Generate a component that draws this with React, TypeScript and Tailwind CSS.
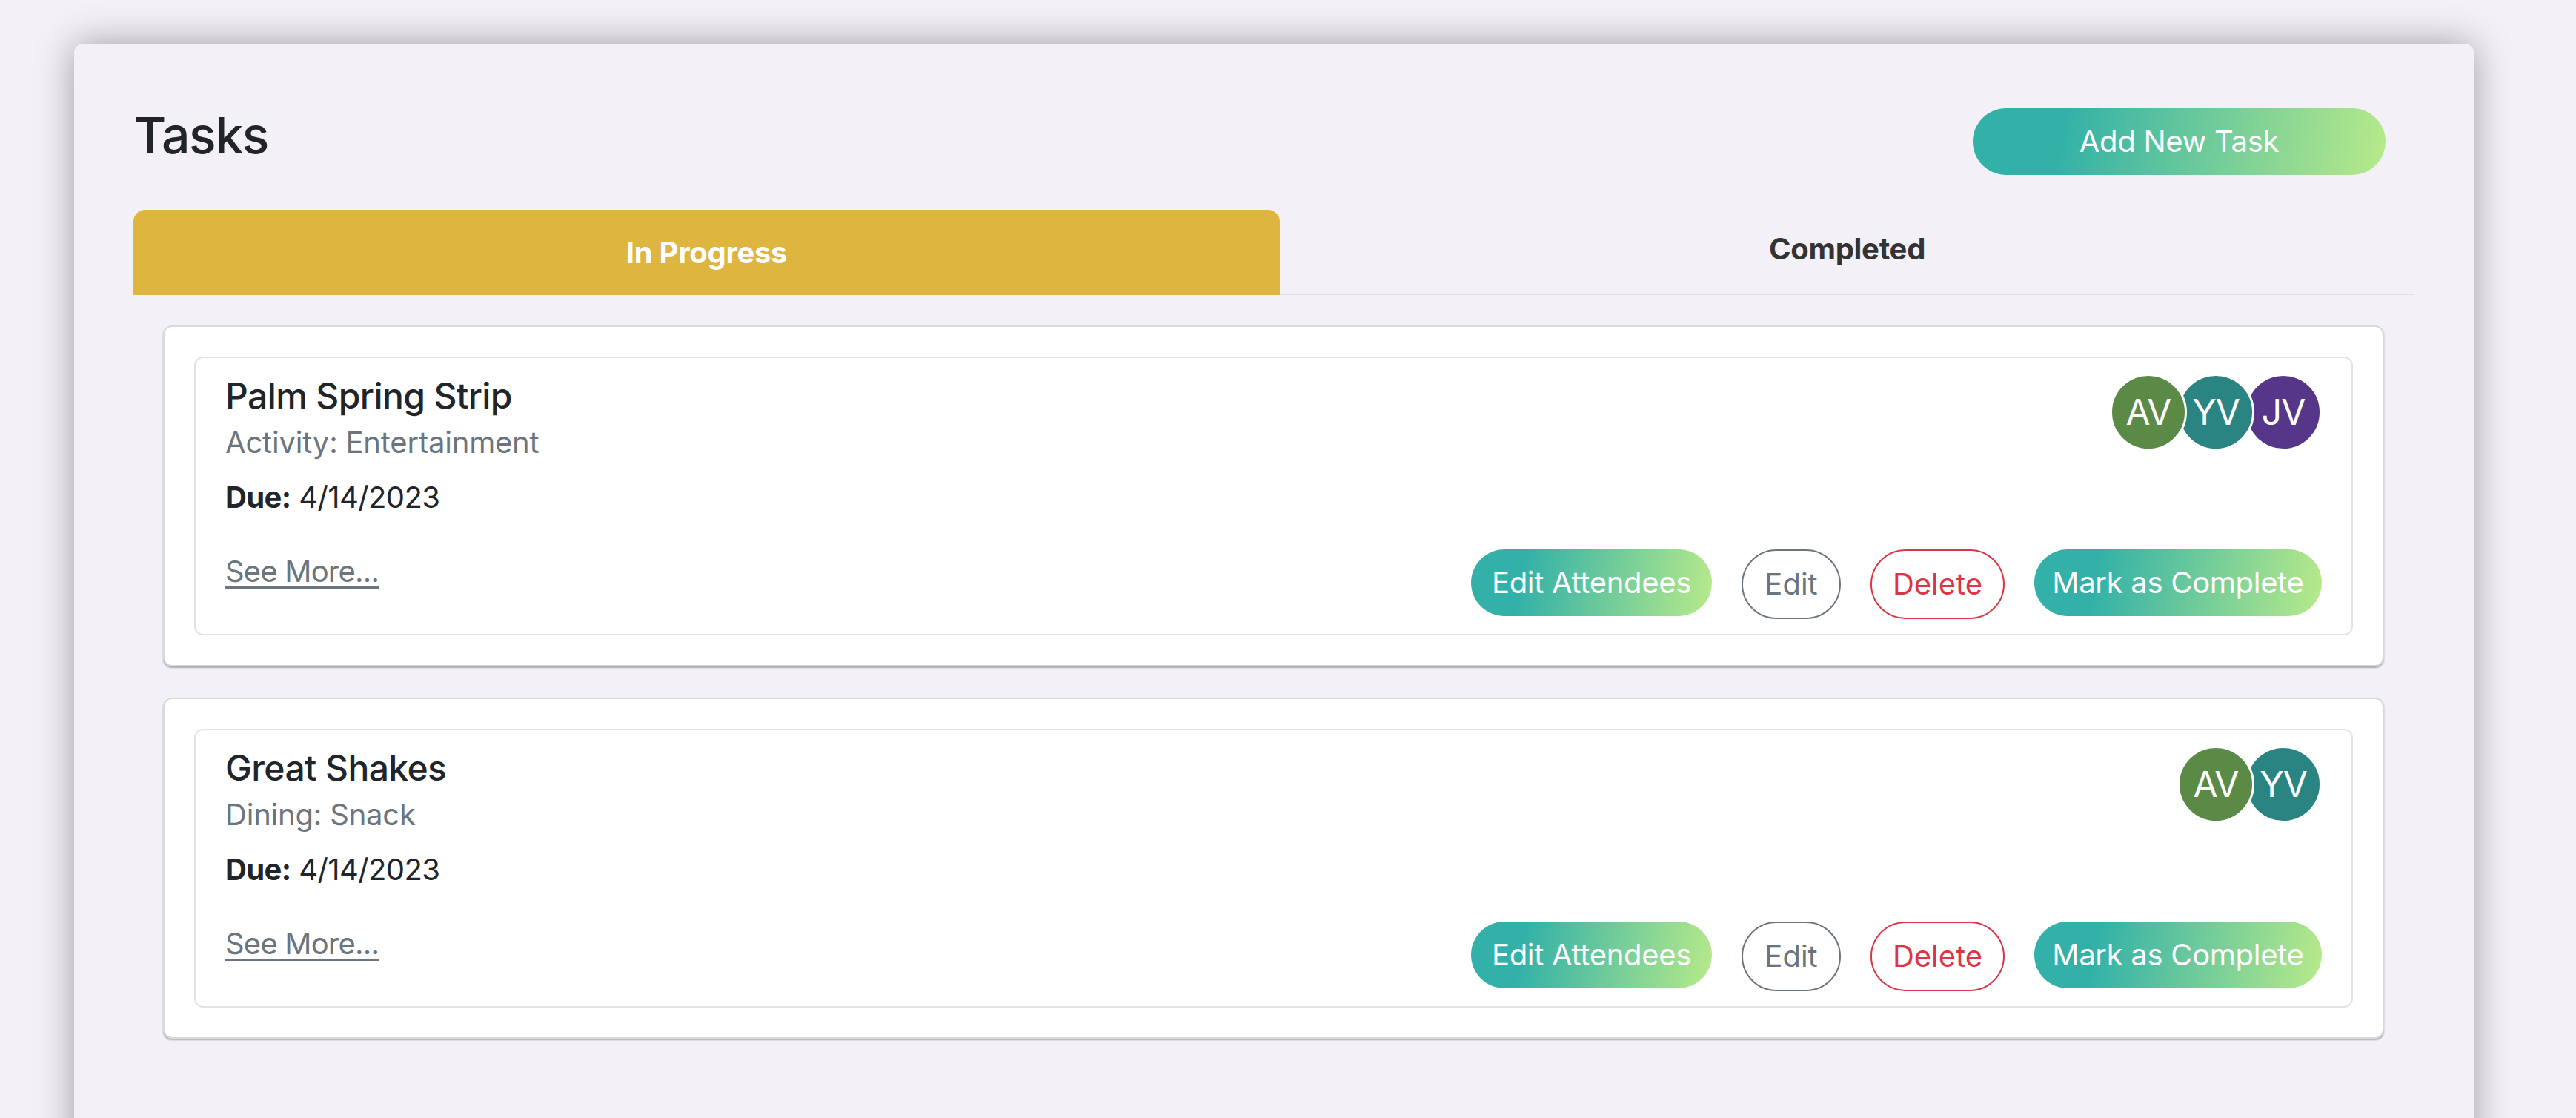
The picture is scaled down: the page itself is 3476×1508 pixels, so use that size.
import React from 'react';

type Person = {initials: string; color: string};

type Task = {
  title: string;
  category: string;
  due: string;
  people: Person[];
};

const tasks: Task[] = [
  {
    title: 'Palm Spring Strip',
    category: 'Activity: Entertainment',
    due: '4/14/2023',
    people: [
      {initials: 'AV', color: 'bg-[#5b8a46]'},
      {initials: 'YV', color: 'bg-[#2a8481]'},
      {initials: 'JV', color: 'bg-[#553689]'}
    ]
  },
  {
    title: 'Great Shakes',
    category: 'Dining: Snack',
    due: '4/14/2023',
    people: [
      {initials: 'AV', color: 'bg-[#5b8a46]'},
      {initials: 'YV', color: 'bg-[#2a8481]'}
    ]
  }
];

const gradient =
  'bg-[linear-gradient(100deg,#33b1a8_22%,#b8ea8a_100%)] text-white';

const zOrder = ['z-[3]', 'z-[2]', 'z-[1]'];

function Avatars({people}: {people: Person[]}) {
  return (
    <div className="flex -mt-[1px]">
      {people.map((p, i) => (
        <div
          key={p.initials}
          className={`relative ${zOrder[i]} ${p.color} ${i > 0 ? '-ml-[13px]' : ''} flex size-[104px] items-center justify-center rounded-full border-[3px] border-white text-[48px] tracking-[-1px] text-white`}
        >
          {p.initials}
        </div>
      ))}
    </div>
  );
}

function TaskCard({task}: {task: Task}) {
  return (
    <div className="rounded-[12px] border-2 border-[#d9d9dc] bg-white p-[40px] shadow-[0_2px_2px_rgba(0,0,0,0.3)]">
      <div className="rounded-[12px] border-2 border-[#e3e3e5] px-[40px] pt-[22px] pb-[20px]">
        {/* Title + attendees */}
        <div className="flex items-start justify-between">
          <div className="flex flex-col">
            <div className="text-[48px] leading-[58px] font-medium tracking-[-0.6px] text-[#212529]">
              {task.title}
            </div>
            <div className="mt-[10px] text-[40px] leading-[48px] tracking-[-0.2px] text-[#6c757d]">
              {task.category}
            </div>
            <div className="mt-[26px] text-[40px] leading-[48px] tracking-[-0.6px] text-[#212529]">
              <span className="font-bold">Due:</span> {task.due}
            </div>
          </div>
          <Avatars people={task.people} />
        </div>
        {/* Footer */}
        <div className="mt-[46px] flex items-start justify-between">
          <a className="mt-[6px] text-[40px] leading-[48px] tracking-[-0.8px] text-[#6c757d] underline decoration-[3px] underline-offset-[6px]">
            See More...
          </a>
          <div className="flex items-start gap-[40px]">
            <button className={`${gradient} flex h-[90px] w-[325px] items-center justify-center rounded-full text-[40px] tracking-[-0.3px]`}>
              Edit Attendees
            </button>
            <button className="flex h-[94px] w-[134px] items-center justify-center rounded-full border-2 border-[#6c757d] text-[40px] text-[#6c757d]">
              Edit
            </button>
            <button className="flex h-[94px] w-[181px] items-center justify-center rounded-full border-2 border-[#dc3545] text-[40px] text-[#dc3545]">
              Delete
            </button>
            <button className={`${gradient} flex h-[90px] w-[388px] items-center justify-center rounded-full text-[40px] tracking-[-0.3px]`}>
              Mark as Complete
            </button>
          </div>
        </div>
      </div>
    </div>
  );
}

export default function App() {
  return (
    <div
      className="h-[1508px] w-[3476px] overflow-hidden bg-[#f3f0f7] pt-[59px] pl-[100px]"
      style={{fontFamily: 'Inter, "Liberation Sans", sans-serif'}}
    >
      <div className="min-h-[1600px] w-[3238px] rounded-[12px] bg-[#f3f1f7] px-[80px] pt-[81px] shadow-[0_0_50px_rgba(0,0,0,0.35)]">
        {/* Header */}
        <div className="flex h-[84px] items-start justify-between">
          <h2 className="text-[68px] leading-[84px] font-medium tracking-[-1.5px] text-[#212529]">
            Tasks
          </h2>
          <button className={`${gradient} mt-[6px] mr-[39px] h-[90px] w-[557px] shrink-0 rounded-full text-[40px] tracking-[-0.3px]`}>
            Add New Task
          </button>
        </div>
        {/* Tabs */}
        <div className="mt-[59px] flex h-[115px] border-b-2 border-[#dee2e6]">
          <div className="flex h-[115px] w-[1547px] shrink-0 items-center justify-center rounded-t-[16px] bg-[#ddb53f] text-[40px] font-bold tracking-[-0.3px] text-white">
            In Progress
          </div>
          <div className="flex flex-1 items-center justify-center pb-[7px] text-[40px] font-bold tracking-[-0.3px] text-[#333333]">
            Completed
          </div>
        </div>
        {/* Task list */}
        <div className="flex flex-col gap-[42px] pt-[41px] pl-[40px] pr-[41px]">
          {tasks.map(t => (
            <TaskCard key={t.title} task={t} />
          ))}
        </div>
      </div>
    </div>
  );
}
